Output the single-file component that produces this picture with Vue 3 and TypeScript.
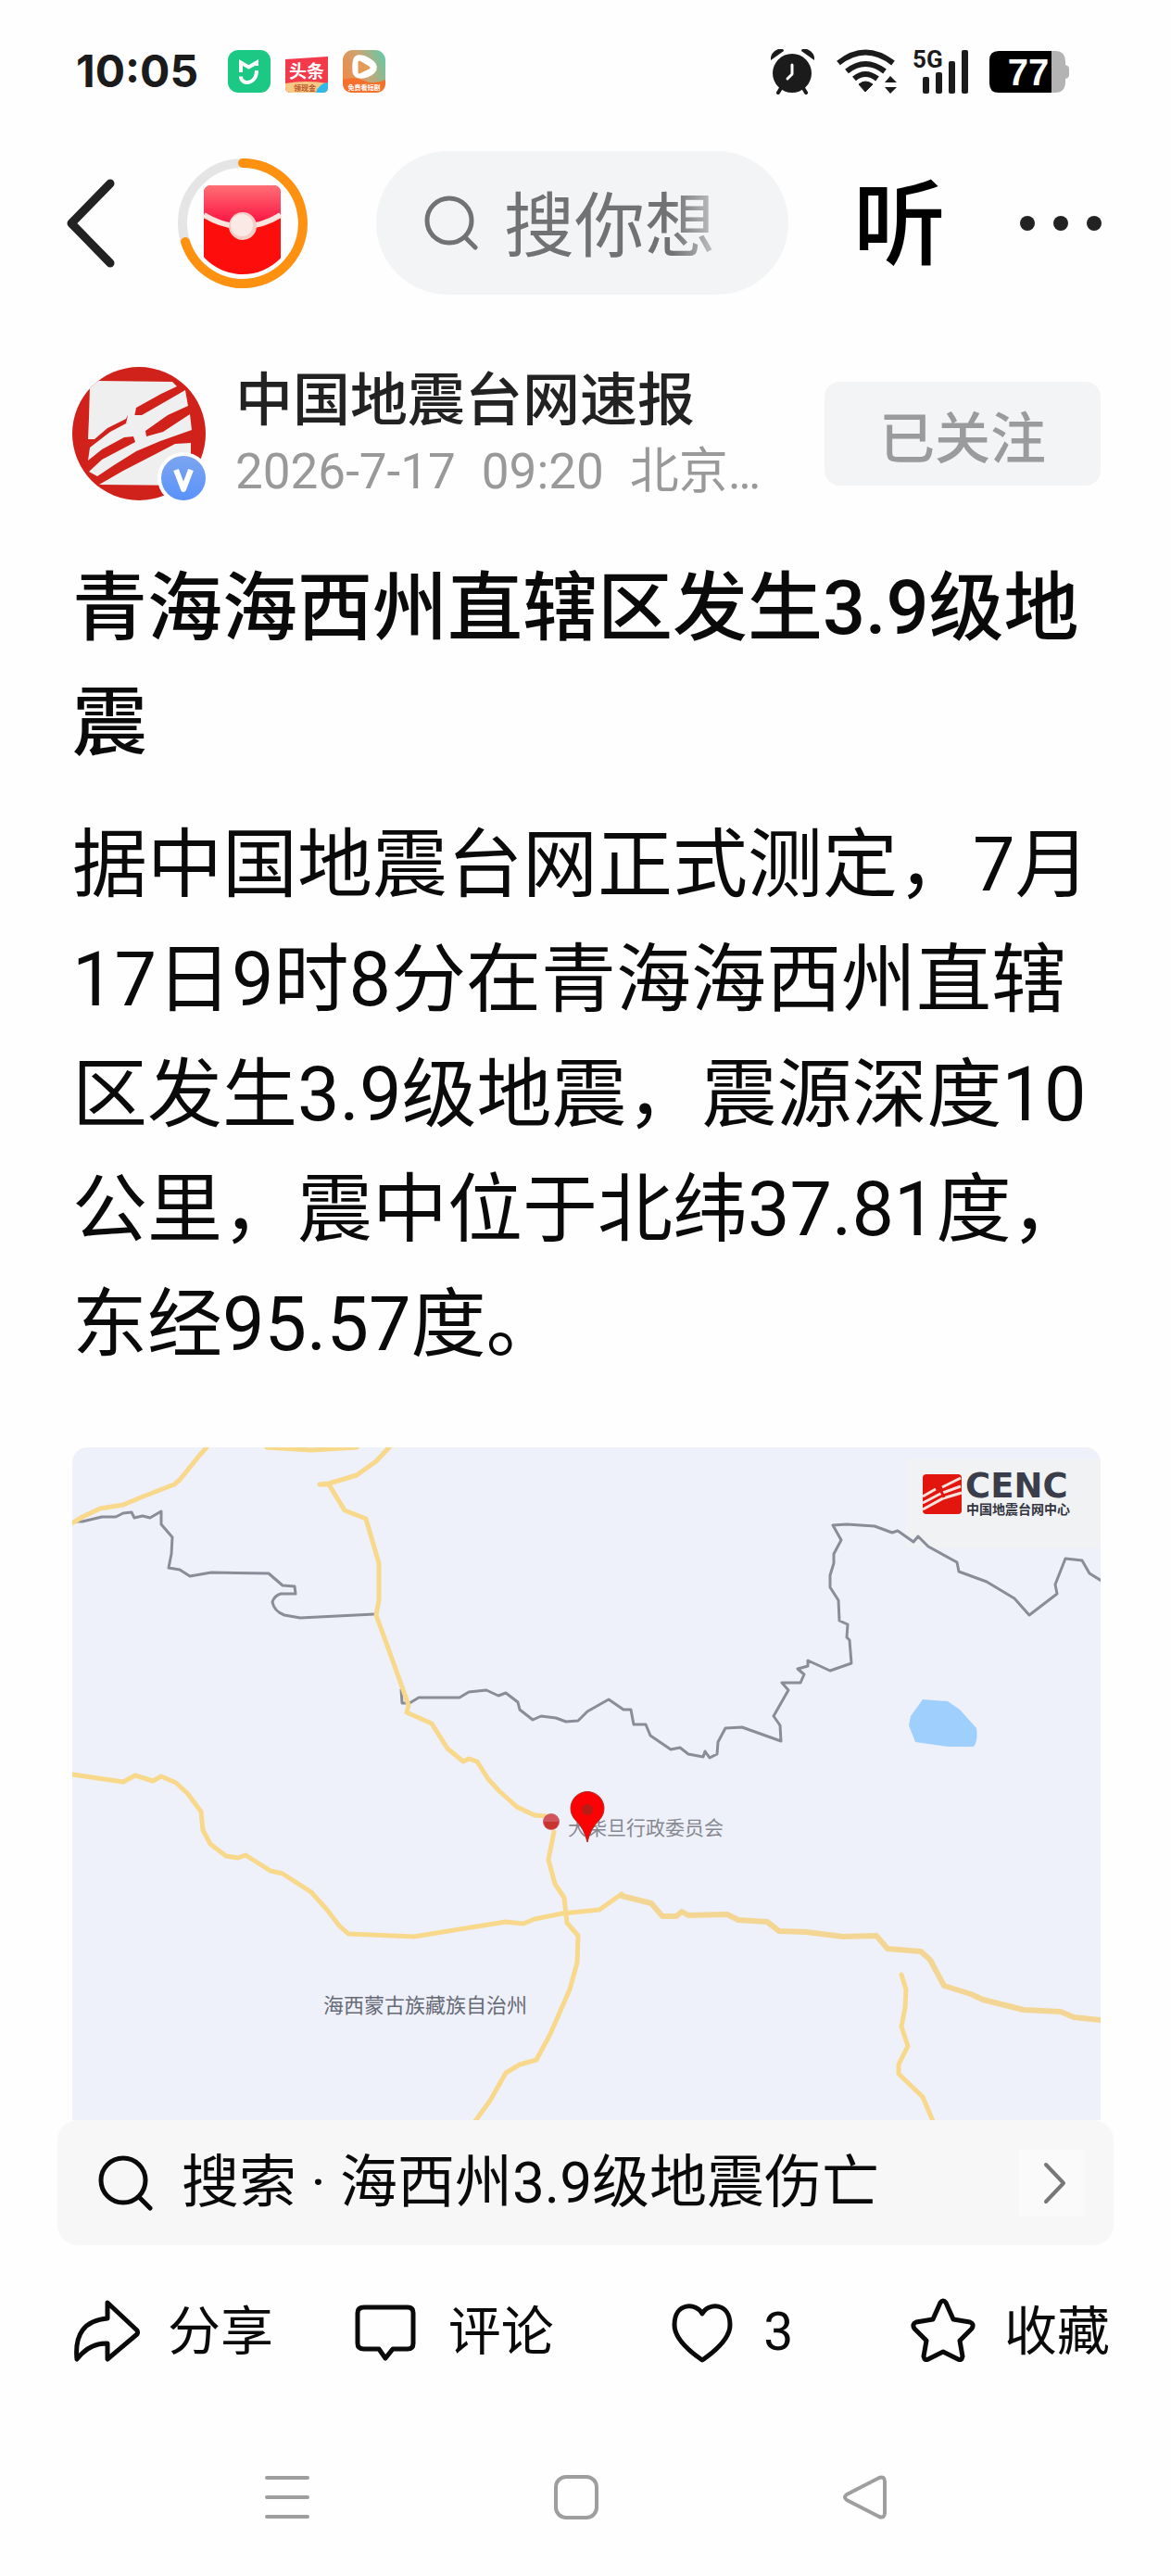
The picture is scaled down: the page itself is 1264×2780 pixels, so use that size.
<script setup lang="ts">
interface Action {
  key: string
  label: string
}

const account = { name: '中国地震台网速报', date: '2026-7-17', time: '09:20', place: '北京…' }

const title = '青海海西州直辖区发生3.9级地震'
const body =
  '据中国地震台网正式测定，7月17日9时8分在青海海西州直辖区发生3.9级地震，震源深度10公里，震中位于北纬37.81度，东经95.57度。'

const actions: Action[] = [
  { key: 'share', label: '分享' },
  { key: 'comment', label: '评论' },
  { key: 'like', label: '3' },
  { key: 'star', label: '收藏' },
]

const roads: string[] = [
  '1,81 11,75 30,66 55,62 74,54 110,40 116,35 137,9 145,0',
  '210,0 258,3 307,0',
  '342,0 328,15 307,30 277,39 267,40 277,40 294,68 317,77 331,125 331,165 328,181 344,225 363,278 361,286 388,298 405,325 422,339 428,336 437,339 449,358 460,370 480,388 499,397 512,398',
  '520,415 514,445 521,471 531,486 534,513 546,527 545,556 537,585 516,633 501,661 483,666 468,675 451,705 435,727',
  '0,353 55,361 68,354 87,360 96,355 112,362 124,373 139,393 141,413 149,428 166,441 179,443 187,440 214,457 227,460 258,480 275,499 288,516 298,525 369,528 468,512 487,514 499,509 529,503 569,499 593,482',
  '895,569 900,585 899,605 895,625 902,646 892,666 892,676 918,701 929,727',
]

const mainRoad =
  '593,484 625,492 637,506 652,506 658,501 665,505 707,504 719,510 750,512 763,522 792,523 832,528 868,527 880,541 916,544 926,553 941,581 970,590 983,596 1027,607 1067,609 1081,615 1111,618'

const borders: string[] = [
  'M1 80 11 80 32 75 47 75 55 71 64 70 67 76 76 74 84 76 96 69 96 83 108 97 107 115 104 130 116 132 127 139 150 135 212 136 227 149 240 150 241 158 225 158 Q218 160 216 167 218 177 229 181 L246 184 326 180',
  'M355 261 356 276 364 276 374 270 418 270 428 264 447 262 460 268 468 265 481 275 483 283 497 294 506 290 522 292 533 296 546 295 556 285 579 272 595 283 603 283 606 299 619 299 624 311 646 326 656 324 665 331 681 334 683 328 688 335 696 331 697 318 705 303 723 302 765 317 764 300 757 290 773 262 766 254 786 254 790 245 783 239 794 236 794 230 818 241 841 233 839 208 836 205 837 191 828 187 827 165 818 151 818 138 822 125 822 115 830 100 821 84 836 83 866 85 885 92 891 90 908 102 913 96 924 107 955 124 957 134 987 145 1017 163 1033 181 1063 158 1061 148 1072 120 1090 122 1098 136 1111 144',
]
</script>

<template>
  <div class="screen">
    <div class="status">
      <span class="clock">10:05</span>
      <svg class="app-icon" viewBox="0 0 46 46" aria-hidden="true">
        <rect width="46" height="46" rx="11" fill="#1bc985" />
        <path d="M14 24V13.500L22.500 18.500 31 13.500V17M31 22C31 38 14 38 14 28.500" fill="none" stroke="#fff" stroke-width="4" />
      </svg>
      <svg class="app-icon" viewBox="0 0 46 46" aria-hidden="true">
        <path d="M0 10 46 7V40Q46 46 40 46H6Q0 46 0 40Z" fill="#f23a4a" />
        <path d="M0 36 Q22 32 46 36V40Q46 46 40 46H6Q0 46 0 40Z" fill="#f8c985" />
        <path d="M46 35V40Q46 46 40 46H33Q36 36 46 35Z" fill="#2fb9ea" />
        <text x="23" y="30" font-size="19" font-weight="700" text-anchor="middle" fill="#fff">头条</text>
        <text x="21" y="44" font-size="8" font-weight="700" text-anchor="middle" fill="#b8532a">领现金</text>
      </svg>
      <svg class="app-icon" viewBox="0 0 46 46" aria-hidden="true">
        <defs>
          <linearGradient id="playBg" x1="0" y1="0.600" x2="1" y2="0.200">
            <stop offset="0" stop-color="#f08a4a" />
            <stop offset="0.500" stop-color="#c9a574" />
            <stop offset="1" stop-color="#69c7a4" />
          </linearGradient>
        </defs>
        <rect width="46" height="46" rx="11" fill="url(#playBg)" />
        <path d="M0 32Q12 28 23 33T46 32V35Q46 46 35 46H11Q0 46 0 35Z" fill="#f4702c" />
        <path d="M14 8Q19 5 28 10 37 15 35 21 32 27 22 29 14 30 12 24 11 12 14 8Z" fill="#fff" stroke="#fff" stroke-width="3" stroke-linejoin="round" />
        <path d="M18 13 28 19 18 24Z" fill="#e49b58" stroke="#e49b58" stroke-width="3" stroke-linejoin="round" />
        <text x="23" y="43" font-size="7" font-weight="700" text-anchor="middle" fill="#fff">免费看短剧</text>
      </svg>

      <span class="spacer"></span>

      <svg class="alarm" viewBox="0 0 47 49" aria-hidden="true">
        <circle cx="23" cy="26" r="21" fill="#1b1b1b" />
        <path d="M0 12Q-1 5 6 1T14 2ZM47 12Q48 5 41 1T33 2Z" fill="#1b1b1b" />
        <path d="M11 42 8 47M35 42 38 47" stroke="#1b1b1b" stroke-width="4" stroke-linecap="round" />
        <path d="M23 17V27L18 32" fill="none" stroke="#fff" stroke-width="3" stroke-linecap="round" stroke-linejoin="round" />
      </svg>
      <svg class="wifi" viewBox="0 0 66 48" aria-hidden="true">
        <path d="M2 15Q31-8 61 15M11 24Q31 8 52 24M19 32Q31 22 44 32" fill="none" stroke="#1b1b1b" stroke-width="6" />
        <path d="M24 38Q31 32 39 38L31 46Z" fill="#1b1b1b" stroke="#1b1b1b" stroke-linejoin="round" />
        <path d="M52 36 58 29 65 36ZM52 41H65L58 48Z" fill="#1b1b1b" />
      </svg>
      <svg class="signal" viewBox="0 0 62 49" aria-hidden="true">
        <text x="0" y="20" class="five-g">5G</text>
        <rect x="11" y="30" width="7" height="18" rx="2" fill="#1b1b1b" />
        <rect x="25" y="25" width="7" height="23" rx="2" fill="#1b1b1b" />
        <rect x="39" y="13" width="7" height="35" rx="2" fill="#1b1b1b" />
        <rect x="53" y="1" width="7" height="47" rx="2" fill="#1b1b1b" />
      </svg>
      <svg class="battery" viewBox="0 0 86 45" aria-hidden="true">
        <path d="M67 0H71Q82 0 82 12V15Q86 16 86 19V26Q86 29 82 30V33Q82 45 71 45H67Z" fill="#b3b3b3" />
        <path d="M67 0H10Q0 0 0 10V35Q0 45 10 45H67Z" fill="#000" />
        <text x="42" y="37" class="level">77</text>
      </svg>
    </div>

    <header class="top">
      <button class="plain" type="button" aria-label="返回">
        <svg width="52" height="96" viewBox="0 0 52 96">
          <path d="M47 5 5 48 47 91" fill="none" stroke="#222" stroke-width="9" stroke-linecap="round" stroke-linejoin="round" />
        </svg>
      </button>
      <button class="plain packet" type="button" aria-label="红包">
        <svg width="140" height="140" viewBox="0 0 140 140">
          <defs>
            <linearGradient id="packetTop" x1="0" y1="0" x2="0" y2="1">
              <stop offset="0" stop-color="#ff6f75" />
              <stop offset="1" stop-color="#fb0a3c" />
            </linearGradient>
            <clipPath id="packetClip"><circle cx="70" cy="68" r="57" /></clipPath>
          </defs>
          <circle cx="70" cy="70" r="65" fill="none" stroke="#e5e5e5" stroke-width="10" />
          <path d="M70 5A65 65 0 1 1 8 90" fill="none" stroke="#ff9110" stroke-width="10" stroke-linecap="round" />
          <g clip-path="url(#packetClip)">
            <rect x="28" y="29" width="83" height="110" rx="8" fill="#fe0d0d" />
            <path d="M28 60V37Q28 29 36 29H103Q111 29 111 37V60Q70 88 28 60Z" fill="url(#packetTop)" />
            <path d="M28 61Q70 86 111 61" fill="none" stroke="#fde3dd" stroke-width="6" />
          </g>
          <circle cx="70" cy="73" r="15" fill="#f3cdc7" />
          <circle cx="69" cy="72" r="12" fill="#fbe9e5" />
        </svg>
      </button>
      <label class="search">
        <svg width="60" height="60" viewBox="0 0 60 60" aria-hidden="true">
          <circle cx="27" cy="27" r="24" fill="none" stroke="#707274" stroke-width="5" />
          <path d="M44 45 55 56" stroke="#707274" stroke-width="5" stroke-linecap="round" />
        </svg>
        <input type="text" placeholder="搜你想" aria-label="搜索" />
      </label>
      <button class="plain listen" type="button">听</button>
      <button class="plain more" type="button" aria-label="更多">
        <svg width="88" height="16" viewBox="0 0 88 16">
          <circle cx="8" cy="8" r="8" fill="#222" />
          <circle cx="44" cy="8" r="8" fill="#222" />
          <circle cx="80" cy="8" r="8" fill="#222" />
        </svg>
      </button>
    </header>

    <main class="article">
      <section class="author">
        <svg class="avatar" viewBox="0 0 144 144" role="img" aria-label="中国地震台网速报">
          <defs>
            <clipPath id="avatarClip"><circle cx="72" cy="72" r="72" /></clipPath>
            <linearGradient id="badge" x1="0" y1="0" x2="0" y2="1">
              <stop offset="0" stop-color="#7ca5ef" />
              <stop offset="1" stop-color="#5a92fb" />
            </linearGradient>
          </defs>
          <g clip-path="url(#avatarClip)">
            <rect width="144" height="144" fill="#d0211b" />
            <path d="M19 20 28 15 108 16 113 21 96 29 69 44 67 54 60 52 58 56 38 66 24 78 17 78 18 55Z" fill="#efefef" />
            <path d="M60 52 75 52 96 40 122 25 125 42 103 52 79 69 80 75 98 70 127 51 129 68 95 80 69 91 45 106 27 118 18 113 32 100 68 81 66 75 56 76 32 89 17 101 19 87 41 70 58 61Z" fill="#efefef" />
            <path d="M128 82V128L29 127 55 112 88 95 111 83Z" fill="#efefef" />
          </g>
          <circle cx="120" cy="120" r="28" fill="#fff" />
          <circle cx="120" cy="120" r="24" fill="url(#badge)" />
          <path d="M112 111 120 132 128 111" fill="none" stroke="#fff" stroke-width="6" stroke-linejoin="round" />
        </svg>
        <div class="who">
          <div class="name">{{ account.name }}</div>
          <div class="meta">
            <span>{{ account.date }}</span>
            <span>{{ account.time }}</span>
            <span>{{ account.place }}</span>
          </div>
        </div>
        <button class="follow" type="button">已关注</button>
      </section>

      <h1>{{ title }}</h1>
      <p class="body">{{ body }}</p>

      <svg class="map" viewBox="0 0 1110 726" role="img" aria-label="震中位置地图">
        <rect width="1110" height="726" fill="#eef1fa" />
        <rect x="900" y="12" width="210" height="96" fill="#f0f2f4" />
        <path d="M918 272 945 274 958 283 976 303Q978 316 973 323H946L910 318 903 300 905 290Z" fill="#9fcffc" />
        <path v-for="b in borders" :key="b" :d="b" class="border" />
        <polyline v-for="r in roads" :key="r" :points="r" class="road" />
        <polyline :points="mainRoad" class="road main" />
        <circle cx="517" cy="404" r="9" fill="#d0555c" />
        <path d="M509 404H525Q524 412 517 412T509 404Z" fill="#c8342f" />
        <text x="535" y="418" font-size="21" class="place">大柴旦行政委员会</text>
        <path d="M556 426Q553 412 543 402A18 18 0 1 1 569 402Q559 412 556 426Z" fill="#fb0204" stroke="#b52a22" />
        <circle cx="556" cy="391" r="6" fill="#b81c16" />
        <text x="271" y="610" font-size="22" class="place dark">海西蒙古族藏族自治州</text>
        <rect x="918" y="29" width="42" height="43" rx="4" fill="#e2150f" />
        <path d="M918 53 932 45M939 43 959 33M918 60 937 50 959 42M918 67 940 55 960 49" fill="none" stroke="#f8e3dd" stroke-width="3" />
        <path d="M936 43 941 54" stroke="#e2150f" stroke-width="3" />
        <text x="964" y="54" class="cenc">CENC</text>
        <text x="965" y="72" class="cenc-sub">中国地震台网中心</text>
      </svg>
    </main>

    <a class="related" href="#">
      <svg width="60" height="60" viewBox="0 0 60 60" aria-hidden="true">
        <circle cx="27" cy="27" r="24" fill="none" stroke="#0a0a0a" stroke-width="5" />
        <path d="M44 45 56 57" stroke="#0a0a0a" stroke-width="5" stroke-linecap="round" />
      </svg>
      <span class="related-text">搜索 · 海西州3.9级地震伤亡</span>
      <span class="go">
        <svg width="26" height="46" viewBox="0 0 26 46" aria-hidden="true">
          <path d="M3 3 22 23 3 43" fill="none" stroke="#777" stroke-width="4" stroke-linecap="round" stroke-linejoin="round" />
        </svg>
      </span>
    </a>

    <div class="actions">
      <button v-for="a in actions" :key="a.key" class="plain action" type="button">
        <svg width="72" height="72" viewBox="0 0 72 72" aria-hidden="true">
          <path v-if="a.key === 'share'" d="M37 6 69 36Q70 38 69 40L37 67V50Q18 49 4 67 0 26 37 23Z" />
          <path v-else-if="a.key === 'comment'" d="M11 11H58Q64 11 64 17V50Q64 56 58 56H42L34 66 27 56H11Q4 56 4 50V17Q4 11 11 11Z" />
          <path v-else-if="a.key === 'like'" d="M36 18C30 6 6 5 6 30 6 44 20 57 36 68 52 57 66 44 66 30 66 5 42 6 36 18Z" />
          <path v-else d="M33 6Q36 2 39 6L47 24 65 27Q70 29 67 34L54 47 57 64Q56 69 52 67L36 59 20 67Q16 69 15 64L18 47 5 34Q2 29 7 27L25 24Z" />
        </svg>
        <span>{{ a.label }}</span>
      </button>
    </div>

    <nav class="system">
      <button class="plain" type="button" aria-label="最近任务">
        <svg width="48" height="48" viewBox="0 0 48 48">
          <path d="M2 3H46M2 24H46M2 45H46" stroke="#9e9e9e" stroke-width="4" stroke-linecap="round" />
        </svg>
      </button>
      <button class="plain" type="button" aria-label="主屏幕">
        <svg width="48" height="48" viewBox="0 0 48 48">
          <rect x="2" y="2" width="44" height="44" rx="11" fill="none" stroke="#9e9e9e" stroke-width="4" />
        </svg>
      </button>
      <button class="plain" type="button" aria-label="返回上一页">
        <svg width="48" height="48" viewBox="0 0 48 48">
          <path d="M4 21 39 3Q45 1 45 7V41Q45 47 39 45L4 27Q0 24 4 21Z" fill="none" stroke="#9e9e9e" stroke-width="4" />
        </svg>
      </button>
    </nav>
  </div>
</template>

<style>
body {
  background: #fefefe;
}
</style>

<style scoped>
.screen {
  font-family: Roboto, "Noto Sans CJK SC", sans-serif;
  color: #0a0a0a;
  background: #fefefe;
  padding-bottom: 61px;
}

svg {
  display: block;
  flex: none;
}

.plain {
  border: 0;
  padding: 0;
  background: none;
  color: inherit;
  font: inherit;
}

/* status bar */
.status {
  display: flex;
  align-items: center;
  gap: 16px;
  height: 50px;
  padding: 52px 110px 61px 82px;
}

.clock {
  font: 700 48px/50px Inter, sans-serif;
  color: #1b1b1b;
  margin-right: 16px;
}

.app-icon {
  width: 46px;
  height: 46px;
}

.spacer {
  flex: 1;
}

.alarm {
  width: 47px;
  height: 49px;
}

.wifi {
  width: 66px;
  height: 48px;
  margin-left: 8px;
}

.signal {
  width: 62px;
  height: 49px;
  overflow: visible;
}

.battery {
  width: 86px;
  height: 45px;
  margin-left: 5px;
}

.five-g {
  font: 700 26px Roboto, sans-serif;
  fill: #1b1b1b;
}

.level {
  font: 700 40px "Liberation Sans", sans-serif;
  fill: #fff;
  text-anchor: middle;
}

/* app bar */
.top {
  display: flex;
  align-items: center;
  padding: 0 75px 0 72px;
}

.packet {
  margin: 0 74px 0 68px;
}

.search {
  flex: 1;
  min-width: 0;
  display: flex;
  align-items: center;
  gap: 26px;
  height: 155px;
  box-sizing: border-box;
  padding: 0 74px 0 52px;
  border-radius: 78px;
  background: #f3f4f6;
}

.search input {
  flex: 1;
  min-width: 0;
  height: 110px;
  padding: 0 0 6px;
  border: 0;
  outline: 0;
  background: none;
  font: 400 76px "Noto Sans CJK SC", sans-serif;
  color: #707274;
  mask-image: linear-gradient(to right, #000 78%, transparent 110%);
}

.search input::placeholder {
  color: #707274;
  opacity: 1;
}

.listen {
  margin: 0 80px 0 70px;
  padding-top: 6px;
  font-size: 100px;
  line-height: 110px;
  font-weight: 500;
  color: #000;
}

/* article */
.article {
  padding: 71px 76px 0 78px;
}

.author {
  display: flex;
  align-items: center;
}

.avatar {
  width: 144px;
  height: 144px;
}

.who {
  flex: 1;
  min-width: 0;
  margin-left: 32px;
  padding-top: 6px;
  line-height: 76px;
  white-space: nowrap;
}

.name {
  font-size: 62px;
  font-weight: 500;
  color: #222;
}

.meta {
  display: flex;
  gap: 28px;
  font-size: 53px;
  color: #999;
}

.follow {
  width: 298px;
  height: 112px;
  border: 0;
  border-radius: 16px;
  background: #f3f4f6;
  color: #999b9c;
  font: 500 60px "Noto Sans CJK SC", sans-serif;
}

h1 {
  margin: 48px 0 29px;
  font-size: 81px;
  line-height: 124px;
  font-weight: 500;
}

.body {
  margin: 0 0 70px;
  font-size: 81px;
  line-height: 124px;
}

.map {
  width: 100%;
  height: auto;
  border-radius: 16px 16px 0 0;
}

.border {
  fill: none;
  stroke: #8a8d98;
  stroke-width: 3;
  stroke-linejoin: round;
}

.road {
  fill: none;
  stroke: #f8d88a;
  stroke-width: 5;
  stroke-linecap: round;
  stroke-linejoin: round;
}

.road.main {
  stroke: #f3d693;
  stroke-width: 6;
}

.place {
  font-family: "Noto Sans CJK SC", sans-serif;
  fill: #85888f;
}

.place.dark {
  fill: #666a76;
}

.cenc {
  font: 700 37px "DejaVu Sans", sans-serif;
  fill: #3a3d4a;
}

.cenc-sub {
  font: 700 14px "Noto Sans CJK SC", sans-serif;
  fill: #333540;
}

/* related search */
.related {
  display: flex;
  align-items: center;
  height: 135px;
  margin: 0 62px;
  padding: 0 32px 0 44px;
  border-radius: 22px;
  background: #f7f7f7;
  color: inherit;
  text-decoration: none;
}

.related-text {
  flex: 1;
  margin-left: 30px;
  font-size: 62px;
  line-height: 80px;
}

.go {
  display: grid;
  place-items: center;
  box-sizing: border-box;
  width: 70px;
  height: 72px;
  padding-left: 8px;
  background: #fafafa;
}

/* action row */
.actions {
  display: grid;
  grid-template-columns: 303fr 341fr 260fr 215fr;
  margin-top: 50px;
  padding: 0 66px 0 79px;
}

.action {
  display: flex;
  align-items: center;
  gap: 30px;
  font-size: 57px;
  line-height: 80px;
  white-space: nowrap;
}

.action span {
  padding-top: 4px;
}

.action path {
  fill: none;
  stroke: #0a0a0a;
  stroke-width: 5;
  stroke-linejoin: round;
}

/* system navigation */
.system {
  display: grid;
  grid-template-columns: repeat(3, 1fr);
  justify-items: center;
  margin-top: 114px;
  padding: 0 174px 0 154px;
}
</style>
